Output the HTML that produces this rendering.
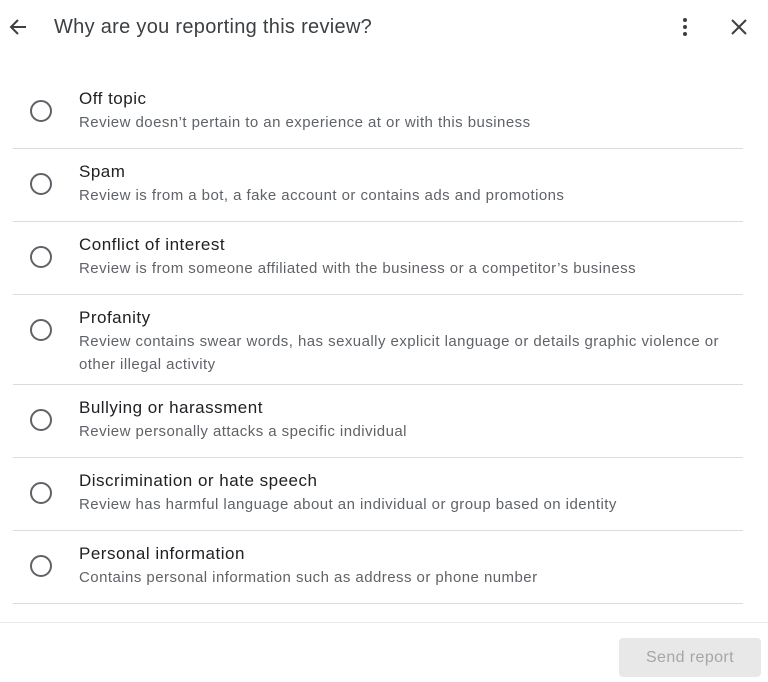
<!DOCTYPE html>
<html><head><style>
body{margin:0;width:768px;height:682px;background:#fff;font-family:"Liberation Sans",sans-serif;position:relative;overflow:hidden}
.hdr{position:absolute;top:16px;left:54px;font-size:20px;color:#3c4043;letter-spacing:0.3px}
.row{position:absolute;left:13px;width:730px;border-bottom:1px solid #dadce0}
.radio{position:absolute;left:17px;width:18px;height:18px;border:2px solid #5f6368;border-radius:50%}
.t{position:absolute;left:66px;font-size:17px;color:#202124;letter-spacing:0.5px}
.d{position:absolute;left:66px;font-size:15px;color:#5f6368;line-height:23px;letter-spacing:0.45px;width:650px}
</style></head><body>
<svg style="position:absolute;left:8px;top:17px" width="20" height="20" viewBox="0 0 20 20"><path d="M18 10H3M10 3L3 10l7 7" fill="none" stroke="#3c4043" stroke-width="2"/></svg>
<div class="hdr">Why are you reporting this review?</div>
<svg style="position:absolute;left:681px;top:17px" width="8" height="20"><circle cx="4" cy="3" r="2" fill="#3c4043"/><circle cx="4" cy="10" r="2" fill="#3c4043"/><circle cx="4" cy="17" r="2" fill="#3c4043"/></svg>
<svg style="position:absolute;left:731px;top:19px" width="16" height="16"><path d="M1 1L15 15M15 1L1 15" stroke="#3c4043" stroke-width="2"/></svg>

<div class="row" style="top:75px;height:73px"><div class="radio" style="top:25px"></div><div class="t" style="top:14px">Off topic</div><div class="d" style="top:36px">Review doesn’t pertain to an experience at or with this business</div></div>
<div class="row" style="top:148px;height:73px"><div class="radio" style="top:25px"></div><div class="t" style="top:14px">Spam</div><div class="d" style="top:36px">Review is from a bot, a fake account or contains ads and promotions</div></div>
<div class="row" style="top:221px;height:73px"><div class="radio" style="top:25px"></div><div class="t" style="top:14px">Conflict of interest</div><div class="d" style="top:36px">Review is from someone affiliated with the business or a competitor’s business</div></div>
<div class="row" style="top:294px;height:90px"><div class="radio" style="top:25px"></div><div class="t" style="top:14px">Profanity</div><div class="d" style="top:36px">Review contains swear words, has sexually explicit language or details graphic violence or<br>other illegal activity</div></div>
<div class="row" style="top:384px;height:73px"><div class="radio" style="top:25px"></div><div class="t" style="top:14px">Bullying or harassment</div><div class="d" style="top:36px">Review personally attacks a specific individual</div></div>
<div class="row" style="top:457px;height:73px"><div class="radio" style="top:25px"></div><div class="t" style="top:14px">Discrimination or hate speech</div><div class="d" style="top:36px">Review has harmful language about an individual or group based on identity</div></div>
<div class="row" style="top:530px;height:73px"><div class="radio" style="top:25px"></div><div class="t" style="top:14px">Personal information</div><div class="d" style="top:36px">Contains personal information such as address or phone number</div></div>

<div style="position:absolute;left:0;top:622px;width:768px;height:1px;background:#e8eaed"></div>
<div style="position:absolute;left:619px;top:638px;width:142px;height:39px;background:#e8e8e8;border-radius:4px;color:#a6a6a6;font-size:16px;line-height:39px;text-align:center;letter-spacing:0.4px">Send report</div>
</body></html>
